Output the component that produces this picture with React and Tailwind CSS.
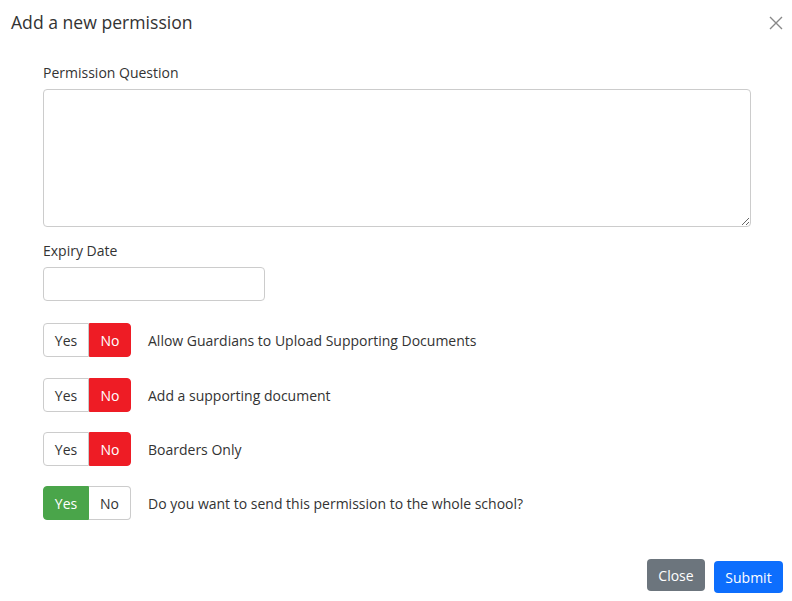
import React, { useState } from 'react'

function Toggle({ value, onChange }) {
  return (
    <div className="flex h-[34px] w-[88px] shrink-0 text-[14px]">
      <button
        onClick={() => onChange(true)}
        className={
          value
            ? 'w-[46px] rounded-l-[4px] border border-[#4aa54a] bg-[#4aa54a] text-white'
            : 'w-[46px] rounded-l-[4px] border border-[#cccccc] bg-white text-[#333]'
        }
      >
        Yes
      </button>
      <button
        onClick={() => onChange(false)}
        className={
          value
            ? 'w-[42px] rounded-r-[4px] border border-l-0 border-[#cccccc] bg-white text-[#333]'
            : 'w-[42px] rounded-r-[4px] border border-[#ee1c25] bg-[#ee1c25] text-white'
        }
      >
        No
      </button>
    </div>
  )
}

function ToggleRow({ label, value, onChange, className }) {
  return (
    <div className={'flex items-center gap-[17px] ' + className}>
      <Toggle value={value} onChange={onChange} />
      <span className="text-[14px] text-[#333]">{label}</span>
    </div>
  )
}

export default function App() {
  const [opts, setOpts] = useState({ upload: false, doc: false, boarders: false, whole: true })
  const set = (k) => (v) => setOpts({ ...opts, [k]: v })

  return (
    <div className="h-[601px] w-[792px] bg-white font-['Open_Sans',sans-serif] text-[#333]">
      <div className="flex items-start justify-between pl-[11px] pr-[6px] pt-[9px]">
        <h1 className="text-[17.6px] leading-[26px] text-[#333]">Add a new permission</h1>
        <button className="mt-[4px] p-[2px] text-[#888]">
          <svg width="16" height="16" viewBox="0 0 16 16" fill="none" stroke="currentColor" strokeWidth="1.4">
            <path d="M2 2 L14 14 M14 2 L2 14" />
          </svg>
        </button>
      </div>

      <div className="pl-[43px] pr-[41px] pt-[28px]">
        <label className="block text-[14px] leading-[20px]">Permission Question</label>
        <textarea className="mt-[6px] block h-[138px] w-full rounded-[4px] border border-[#cccccc] p-2 text-[14px] outline-none" />

        <label className="mt-[14px] block text-[14px] leading-[20px]">Expiry Date</label>
        <input className="mt-[6px] block h-[34px] w-[222px] rounded-[4px] border border-[#cccccc] px-2 text-[14px] outline-none" />

        <ToggleRow className="mt-[22px]" label="Allow Guardians to Upload Supporting Documents" value={opts.upload} onChange={set('upload')} />
        <ToggleRow className="mt-[21px]" label="Add a supporting document" value={opts.doc} onChange={set('doc')} />
        <ToggleRow className="mt-[20px]" label="Boarders Only" value={opts.boarders} onChange={set('boarders')} />
        <ToggleRow className="mt-[20px]" label="Do you want to send this permission to the whole school?" value={opts.whole} onChange={set('whole')} />
      </div>

      <div className="mt-[39px] flex items-start justify-end gap-[9px] pr-[9px]">
        <button className="h-[32px] w-[58px] rounded-[4px] bg-[#6c757d] text-[14px] text-white">Close</button>
        <button className="mt-[2px] h-[32px] w-[69px] rounded-[4px] bg-[#0d6efd] text-[14px] text-white">Submit</button>
      </div>
    </div>
  )
}
